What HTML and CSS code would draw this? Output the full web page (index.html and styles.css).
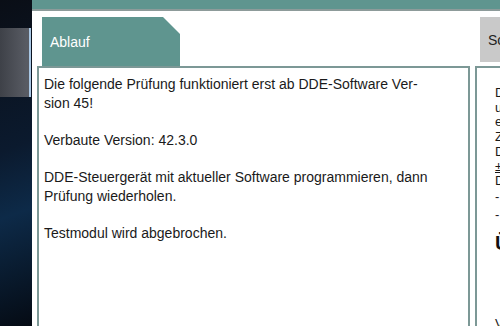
FILE: index.html
```html
<!DOCTYPE HTML>
<html lang="de">
<head>
    <meta charset="utf-8">
    <meta name="viewport" content="width=device-width, initial-scale=1">
    <title>Prüfung</title>
    <link rel="stylesheet" href="styles.css">
</head>
<body>
    <aside class="side">
        <div class="side-item"></div>
    </aside>
    <main class="panel">
        <div class="topbar"></div>
        <div class="columns">
            <section class="column column-main">
                <div class="tab tab-active">Ablauf</div>
                <div class="box box-main">
                    <p>Die folgende Prüfung funktioniert erst ab DDE-Software Ver&shy;sion 45!</p>
                    <p>Verbaute Version: 42.3.0</p>
                    <p>DDE-Steuergerät mit aktueller Software programmieren, dann Prüfung wiederholen.</p>
                    <p>Testmodul wird abgebrochen.</p>
                </div>
            </section>
            <section class="column column-side">
                <div class="tab tab-inactive">Schaltplan</div>
                <div class="box box-side">
                    <p>Die Prüfung<br>umfasst folgende<br>einzelne Schritte:<br>Zustand prüfen<br>DDE auslesen<br><span class="link">± Details</span><br>Daten speichern</p>
                    <p class="item">- Fehlerspeicher</p>
                    <p class="item">- Software</p>
                    <h3>Übersicht</h3>
                    <p class="late">Version</p>
                </div>
            </section>
        </div>
    </main>
</body>
</html>
```
FILE: styles.css
```css
body {
    margin: 0;
    display: flex;
    height: 100vh;
    overflow: hidden;
    font-family: "Liberation Sans", Arial, sans-serif;
    background: #000;
}

/* Left strip */
.side {
    width: 32px;
    flex-shrink: 0;
    padding-top: 28px;
    background: linear-gradient(160deg, #0a0e16 0%, #0b1a2e 45%, #0d2a48 65%, #050b14 100%);
}
.side-item {
    height: 69px;
    margin-right: 1px;
    background: linear-gradient(90deg, #3e4148 0%, #585b63 90%);
    border-right: 2px solid #a9c7e4;
}

/* Main panel */
.panel {
    flex: 1;
    background: #fff;
    min-width: 0;
}
.topbar {
    height: 9px;
    background: #5f958f;
    border-bottom: 2px solid #8d9b9a;
}
.columns {
    display: flex;
    gap: 5px;
    padding: 6px 0 0 5px;
}
.column-main {
    width: 433px;
    flex-shrink: 0;
}
.column-side {
    width: 300px;
    flex-shrink: 0;
}

/* Tabs */
.tab {
    margin-left: 5px;
    font-size: 14px;
    display: flex;
    align-items: center;
    padding-left: 8px;
}
.tab-active {
    width: 130px;
    height: 49px;
    background: #5f958f;
    color: #fff;
    clip-path: polygon(0 0, 121px 0, 100% 17px, 100% 100%, 0 100%);
}
.tab-inactive {
    width: 130px;
    height: 45px;
    margin-bottom: 4px;
    background: #c9c9c9;
    color: #222;
}

/* Content boxes */
.box {
    border: 2px solid #7c9896;
    border-bottom: none;
    height: 300px;
    color: #1a1a1a;
}
.box-main {
    font-size: 14px;
    line-height: 19px;
    padding: 7px 36px 0 5px;
    hyphens: manual;
}
.box-main p {
    margin: 0 0 18px;
}
.box-side {
    font-size: 13px;
    line-height: 14.7px;
    padding: 18px 10px 0 18px;
}
.box-side p {
    margin: 0;
}
.box-side .item {
    margin-top: 1px;
}
.box-side .item + .item {
    margin-top: 3px;
}
.link {
    text-decoration: underline;
}
.box-side h3 {
    font-size: 20px;
    line-height: 24px;
    margin: 9px 0 0;
    color: #111;
}
.box-side .late {
    margin-top: 62px;
}
```
